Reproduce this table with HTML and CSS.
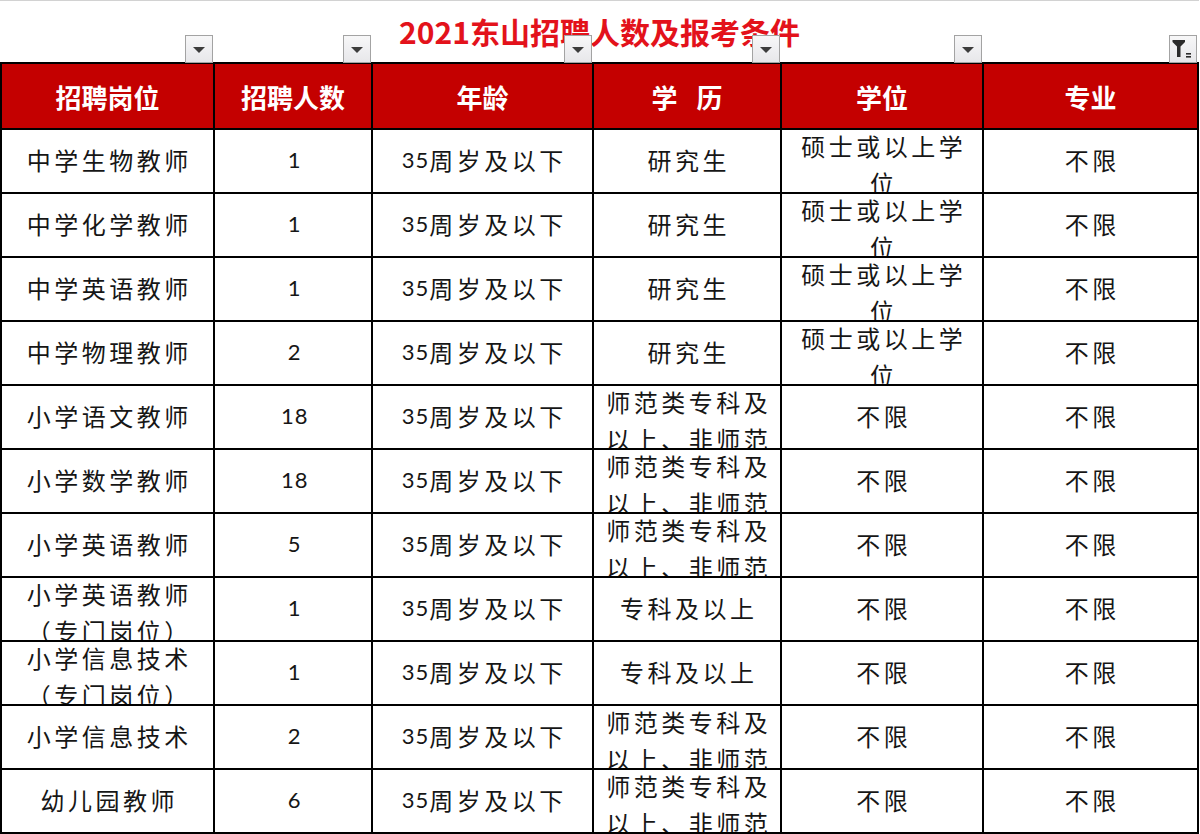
FILE: index.html
```html
<!DOCTYPE html>
<html lang="zh-CN">
<head>
<meta charset="utf-8">
<title>2021东山招聘人数及报考条件</title>
<link rel="stylesheet" href="styles.css">
</head>
<body>
<div class="sheet">
  <div class="titlebar">
    <h1 class="title">2021东山招聘人数及报考条件</h1>
    <span class="dd c1"><span class="tri"></span></span>
    <span class="dd c2"><span class="tri"></span></span>
    <span class="dd c3"><span class="tri"></span></span>
    <span class="dd c4"><span class="tri"></span></span>
    <span class="dd c5"><span class="tri"></span></span>
    <span class="dd c6">
      <svg class="funnel" viewBox="0 0 26 26" width="26" height="26" aria-hidden="true">
        <path d="M2.5 4 H15 V6 L10.5 10.5 V21 H7 V10.5 L2.5 6 Z" fill="#2b2b2b"/>
        <rect x="16" y="17" width="5" height="1.6" fill="#2b2b2b"/>
        <rect x="16" y="20" width="5" height="1.6" fill="#2b2b2b"/>
      </svg>
    </span>
  </div>
  <div class="grid">
    <div class="hd">招聘岗位</div>
    <div class="hd">招聘人数</div>
    <div class="hd">年龄</div>
    <div class="hd">学 历</div>
    <div class="hd">学位</div>
    <div class="hd">专业</div>

    <div class="cell">中学生物教师</div>
    <div class="cell"><span class="num">1</span></div>
    <div class="cell"><span class="num">35</span>周岁及以下</div>
    <div class="cell">研究生</div>
    <div class="cell top"><span class="wrap">硕士或以上学位</span></div>
    <div class="cell">不限</div>

    <div class="cell">中学化学教师</div>
    <div class="cell"><span class="num">1</span></div>
    <div class="cell"><span class="num">35</span>周岁及以下</div>
    <div class="cell">研究生</div>
    <div class="cell top"><span class="wrap">硕士或以上学位</span></div>
    <div class="cell">不限</div>

    <div class="cell">中学英语教师</div>
    <div class="cell"><span class="num">1</span></div>
    <div class="cell"><span class="num">35</span>周岁及以下</div>
    <div class="cell">研究生</div>
    <div class="cell top"><span class="wrap">硕士或以上学位</span></div>
    <div class="cell">不限</div>

    <div class="cell">中学物理教师</div>
    <div class="cell"><span class="num">2</span></div>
    <div class="cell"><span class="num">35</span>周岁及以下</div>
    <div class="cell">研究生</div>
    <div class="cell top"><span class="wrap">硕士或以上学位</span></div>
    <div class="cell">不限</div>

    <div class="cell">小学语文教师</div>
    <div class="cell"><span class="num">18</span></div>
    <div class="cell"><span class="num">35</span>周岁及以下</div>
    <div class="cell top"><span class="wrap">师范类专科及以上、非师范类本科及以上</span></div>
    <div class="cell">不限</div>
    <div class="cell">不限</div>

    <div class="cell">小学数学教师</div>
    <div class="cell"><span class="num">18</span></div>
    <div class="cell"><span class="num">35</span>周岁及以下</div>
    <div class="cell top"><span class="wrap">师范类专科及以上、非师范类本科及以上</span></div>
    <div class="cell">不限</div>
    <div class="cell">不限</div>

    <div class="cell">小学英语教师</div>
    <div class="cell"><span class="num">5</span></div>
    <div class="cell"><span class="num">35</span>周岁及以下</div>
    <div class="cell top"><span class="wrap">师范类专科及以上、非师范类本科及以上</span></div>
    <div class="cell">不限</div>
    <div class="cell">不限</div>

    <div class="cell top"><span class="wrap">小学英语教师（专门岗位）</span></div>
    <div class="cell"><span class="num">1</span></div>
    <div class="cell"><span class="num">35</span>周岁及以下</div>
    <div class="cell">专科及以上</div>
    <div class="cell">不限</div>
    <div class="cell">不限</div>

    <div class="cell top"><span class="wrap">小学信息技术（专门岗位）</span></div>
    <div class="cell"><span class="num">1</span></div>
    <div class="cell"><span class="num">35</span>周岁及以下</div>
    <div class="cell">专科及以上</div>
    <div class="cell">不限</div>
    <div class="cell">不限</div>

    <div class="cell">小学信息技术</div>
    <div class="cell"><span class="num">2</span></div>
    <div class="cell"><span class="num">35</span>周岁及以下</div>
    <div class="cell top"><span class="wrap">师范类专科及以上、非师范类本科及以上</span></div>
    <div class="cell">不限</div>
    <div class="cell">不限</div>

    <div class="cell">幼儿园教师</div>
    <div class="cell"><span class="num">6</span></div>
    <div class="cell"><span class="num">35</span>周岁及以下</div>
    <div class="cell top"><span class="wrap">师范类专科及以上、非师范类本科及以上</span></div>
    <div class="cell">不限</div>
    <div class="cell">不限</div>
  </div>
</div>
</body>
</html>
```

FILE: styles.css
```css
html, body {
  margin: 0;
  padding: 0;
  background: #ffffff;
}

body {
  font-family: "Noto Sans CJK SC", "Noto Sans", sans-serif;
  color: #161616;
}

.sheet {
  width: 1199px;
  height: 834px;
  overflow: hidden;
}

.titlebar {
  display: grid;
  grid-template-columns: 211px 156px 219px 186px 200px 213px;
  column-gap: 2px;
  padding: 0 2px;
  height: 61px;
  border-top: 1px solid #d2d2d2;
  box-sizing: content-box;
}

.title {
  grid-column: 1 / -1;
  grid-row: 1;
  margin: 0;
  text-align: center;
  font-size: 30px;
  font-weight: 700;
  line-height: 60px;
  color: #e3121b;
  font-family: "Noto Sans CJK SC", sans-serif;
}

.dd {
  grid-row: 1;
  justify-self: end;
  align-self: end;
  width: 26px;
  height: 26px;
  border: 1px solid #a3a3a3;
  background: linear-gradient(#f7f7f8, #e7e7ea);
  display: flex;
  align-items: center;
  justify-content: center;
  margin-bottom: -1px;
  position: relative;
  z-index: 2;
}

.c1 { grid-column: 1; }
.c2 { grid-column: 2; }
.c3 { grid-column: 3; }
.c4 { grid-column: 4; }
.c5 { grid-column: 5; }
.c6 { grid-column: 6; }

.tri {
  width: 0;
  height: 0;
  border-left: 6px solid transparent;
  border-right: 6px solid transparent;
  border-top: 6px solid #3c3c3c;
  margin-top: 2px;
}

.funnel {
  display: block;
}

.grid {
  display: grid;
  grid-template-columns: 211px 156px 219px 186px 200px 213px;
  grid-template-rows: 64px;
  grid-auto-rows: 62px;
  gap: 2px;
  padding: 2px;
  background: #000000;
  width: max-content;
}

.hd {
  background: #c40000;
  color: #ffffff;
  font-size: 26px;
  font-weight: 700;
  display: flex;
  align-items: center;
  justify-content: center;
  word-spacing: 13px;
}

.cell {
  background: #ffffff;
  font-size: 24px;
  letter-spacing: 3.5px;
  line-height: 37px;
  text-align: center;
  display: flex;
  align-items: center;
  justify-content: center;
  padding: 0 6px 4px 9.5px;
  overflow: hidden;
}

.cell.top {
  align-items: flex-start;
  padding-bottom: 0;
}

.wrap {
  display: block;
  margin-top: -3px;
}

.num {
  font-family: "Lato", "Liberation Sans", sans-serif;
  font-size: 22px;
  letter-spacing: 1px;
}
```
